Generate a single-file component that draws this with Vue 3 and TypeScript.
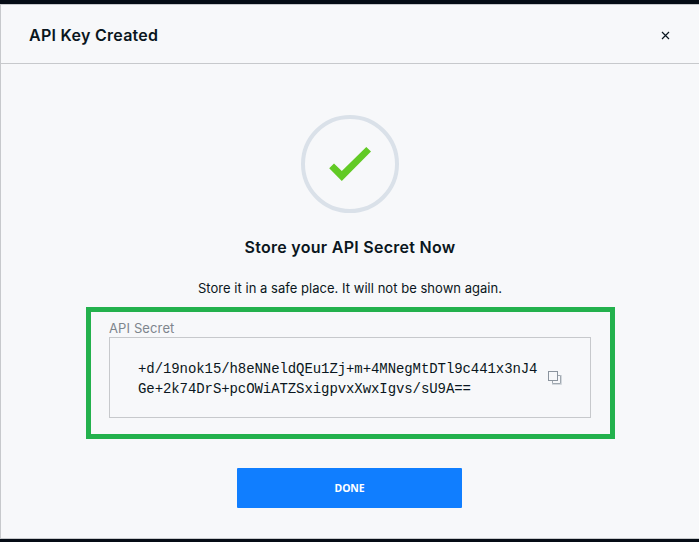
<script setup lang="ts">
import { ref } from 'vue'

const secretLines: string[] = [
  '+d/19nok15/h8eNNeldQEu1Zj+m+4MNegMtDTl9c441x3nJ4',
  'Ge+2k74DrS+pcOWiATZSxigpvxXwxIgvs/sU9A==',
]
const copied = ref(false)

async function copySecret(): Promise<void> {
  await navigator.clipboard.writeText(secretLines.join(''))
  copied.value = true
}
</script>

<template>
  <div class="backdrop">
    <section class="modal" role="dialog" aria-labelledby="modal-title">
      <header class="header">
        <h1 id="modal-title">API Key Created</h1>
        <button class="close" aria-label="Close">
          <svg width="9" height="9" viewBox="0 0 9 9"><path d="M1 1 L8 8 M8 1 L1 8" /></svg>
        </button>
      </header>
      <main class="body">
        <svg class="success" width="98" height="98" viewBox="0 0 98 98">
          <circle cx="49" cy="49" r="47" />
          <path d="M28.2 53.2 L33 48.5 L40.8 56 L65.3 32 L70 36.6 L40.8 66 Z" />
        </svg>
        <h2>Store your API Secret Now</h2>
        <p class="note">Store it in a safe place. It will not be shown again.</p>
        <div class="highlight">
          <div class="label">API Secret</div>
          <div class="secret">
            <code><span v-for="line in secretLines" :key="line">{{ line }}</span></code>
            <button class="copy" :class="{ copied }" aria-label="Copy" @click="copySecret">
              <svg width="15" height="15" viewBox="0 0 15 15">
                <path class="shade" d="M4 13.5 H13.5 V4" />
                <path class="rear" d="M4.5 10 V12.5 H12.5 V4.5 H10" />
                <rect x="0.5" y="0.5" width="9" height="9" />
              </svg>
            </button>
          </div>
        </div>
        <button class="done">DONE</button>
      </main>
    </section>
  </div>
</template>

<style>
body {
  margin: 0;
  overflow: hidden;
}
</style>

<style scoped>
.backdrop {
  box-sizing: border-box;
  width: 699px;
  height: 542px;
  padding: 4px 0 3px;
  background: #050c15;
  color: #0a1620;
  font-family: Inter, "Liberation Sans", sans-serif;
}
.modal {
  box-sizing: border-box;
  height: 535px;
  border: 1px solid #c7c9cc;
  border-right: 0;
  background: #f7f8fa;
}
.header {
  box-sizing: border-box;
  display: flex;
  align-items: center;
  justify-content: space-between;
  height: 59px;
  padding: 1px 29px 0 28px;
  border-bottom: 1px solid #c7c9cc;
}
h1,
h2,
p {
  margin: 0;
}
h1,
h2 {
  font-size: 16px;
  line-height: 22px;
  font-weight: 600;
  letter-spacing: 0.28px;
  white-space: nowrap;
}
button {
  padding: 0;
  border: 0;
  background: none;
  font-family: inherit;
}
.close {
  display: flex;
  padding-top: 2px;
}
.close path {
  fill: none;
  stroke: #0a1620;
  stroke-width: 1.2;
}
.body {
  display: flex;
  flex-direction: column;
  align-items: center;
  padding-top: 51px;
}
.success circle {
  fill: none;
  stroke: #dae1e9;
  stroke-width: 4;
}
.success path {
  fill: #62ca25;
}
h2 {
  margin-top: 23px;
}
.note {
  margin-top: 20px;
  font-size: 13px;
  line-height: 20px;
  letter-spacing: 0.03px;
  white-space: nowrap;
}
.highlight {
  box-sizing: border-box;
  width: 529px;
  height: 132px;
  margin: 9px 0 29px 1px;
  padding: 8px 19px 0 18px;
  border: 5px solid #23b14d;
}
.label {
  height: 17px;
  color: #7e858d;
  font-size: 13px;
  line-height: 17px;
  letter-spacing: 0.12px;
}
.secret {
  box-sizing: border-box;
  display: flex;
  align-items: center;
  height: 81px;
  padding: 2px 0 0 28px;
  border: 1px solid #c7c9cc;
}
code {
  display: flex;
  flex-direction: column;
  width: 410px;
  font-family: "Liberation Mono", monospace;
  font-size: 14px;
  line-height: 20px;
  letter-spacing: -0.08px;
  white-space: nowrap;
}
.copy {
  display: flex;
}
.copy svg {
  fill: none;
  stroke: #8b949e;
}
.copy .rear {
  stroke: #a0a8b0;
}
.copy .shade {
  stroke: #d3d8dd;
}
.done {
  width: 225px;
  height: 40px;
  margin-right: 1px;
  border-radius: 1px;
  background: #107eff;
  color: #fff;
  font-family: "Noto Sans", sans-serif;
  font-size: 10.5px;
  line-height: 40px;
  font-weight: 700;
  letter-spacing: -0.15px;
}
</style>
